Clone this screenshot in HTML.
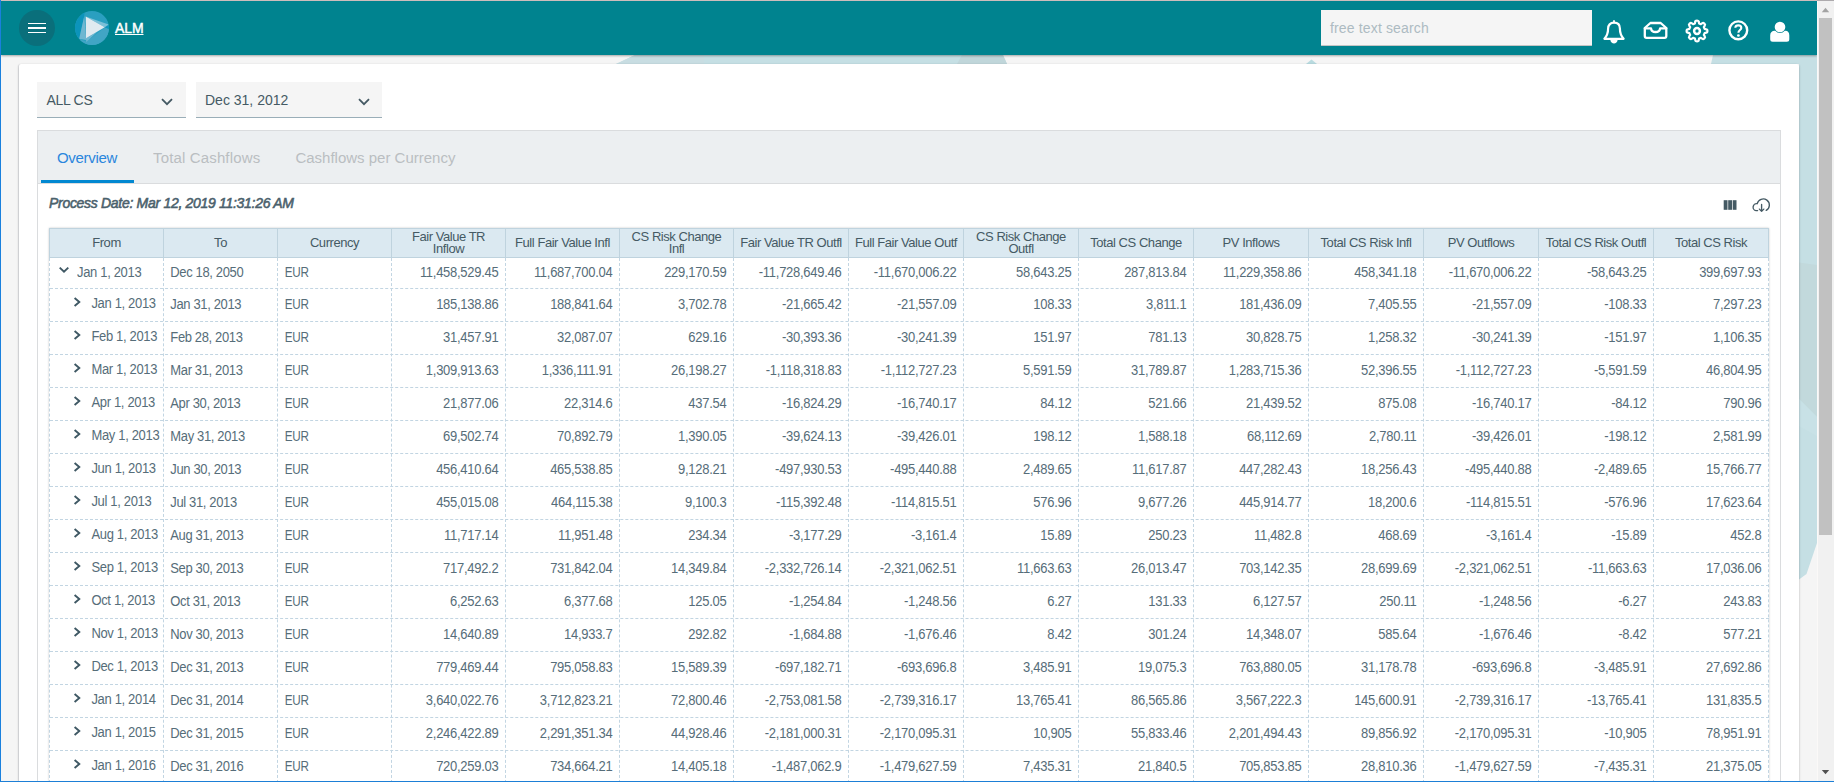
<!DOCTYPE html>
<html lang="en">
<head>
<meta charset="utf-8">
<title>ALM</title>
<style>
*{box-sizing:border-box;margin:0;padding:0}
html,body{width:1834px;height:782px;overflow:hidden;background:#f5f5f5;font-family:"Liberation Sans",sans-serif;color:#455a64}
#root{position:absolute;left:0;top:0;width:1834px;height:782px;overflow:hidden;background:#f5f5f5}
.abs{position:absolute}
#bgsvg{position:absolute;left:0;top:0;width:1817px;height:782px}
#header{position:absolute;left:1px;top:1px;width:1816px;height:54px;background:#00838f;box-shadow:0 1px 2px rgba(0,0,0,.32)}
#topline{position:absolute;left:1px;top:0;width:1833px;height:1px;background:linear-gradient(to right,#cdbdbc 0,#cdbdbc 1816px,#adaaad 1816px,#adaaad 1833px)}
#leftline{position:absolute;left:0;top:0;width:1px;height:782px;background:#1a80dd}
#botline{position:absolute;left:0;top:781px;width:1834px;height:1px;background:#1d7fd6}
#sb{position:absolute;left:1817px;top:1px;width:17px;height:780px;background:#f1f1f1;border-left:1px solid #fbf9f8}
#sb .thumb{position:absolute;left:1px;top:17px;width:13px;height:517px;background:#c1c1c1}
#menu{position:absolute;left:18px;top:9px;width:36px;height:36px;border-radius:50%;background:#0a6f7b}
#menu i{position:absolute;left:9px;width:18px;height:2px;background:#fff}
#alm{position:absolute;left:114px;top:19px;font-size:14px;font-weight:normal;-webkit-text-stroke:0.45px #fff;color:#fff;text-decoration:underline;line-height:16px;letter-spacing:-0.1px}
#search{position:absolute;left:1320px;top:9px;width:271px;height:36px;background:#f5f5f5;color:#adbbc2;font-size:14px;line-height:36px;padding-left:9px;letter-spacing:0.15px;border-bottom:1px solid #c4c4c4}
.hic{position:absolute;overflow:visible}
#card{position:absolute;left:19px;top:64px;width:1780px;height:740px;background:#fff;border-radius:2px;box-shadow:0 1px 3px rgba(0,0,0,.12),0 1px 2px rgba(0,0,0,.2),-1px 0 1px rgba(40,50,90,.08)}
.dd{position:absolute;top:82px;height:36px;background:#f5f5f5;border-bottom:1px solid #9aaeb8;font-size:14px;line-height:37px;padding-left:9px;color:#455a64}
.dd svg{position:absolute;right:13px;top:16px;width:12px;height:8px}
#panel{position:absolute;left:37px;top:130px;width:1744px;height:700px;border:1px solid #dadcde;background:#fff}
#tabs{position:absolute;left:0;top:0;width:1742px;height:53px;background:#eceff1;border-bottom:1px solid #dadcde}
.tab{position:absolute;top:0;height:52px;line-height:54px;font-size:15px;color:#babec1;white-space:nowrap;transform:scaleY(1.03)}
.tab.on{color:#2a86dd}
#ink{position:absolute;left:41px;top:180px;width:93px;height:3px;background:#0288d1}
#pd{position:absolute;left:49px;top:194px;font-size:14px;font-weight:normal;font-style:italic;line-height:18px;color:#4b616c;-webkit-text-stroke:0.55px #4b616c;white-space:nowrap;letter-spacing:-0.3px;transform:scaleY(1.03);transform-origin:0 50%}
/* table */
.tshadow{position:absolute;left:49px;top:228px;width:1720px;height:600px;box-shadow:0 0 2px rgba(0,0,0,.22)}
.th-bg{position:absolute;left:49px;top:228px;width:1720px;height:30px;background:#dbe9f1;border-top:1px solid #bfd3de;border-bottom:1px solid #bfd3de}
.th{position:absolute;top:229px;height:28px;line-height:28px;text-align:center;font-size:13px;color:#455a64;white-space:nowrap;letter-spacing:-0.45px}
.th.two{line-height:12px;padding-top:2px}
.hv{position:absolute;top:228px;width:1px;height:30px;background:#bfd3de}
.vd{position:absolute;top:258px;width:0;height:530px;border-left:1px dashed #c2d5e2}
.hd{position:absolute;left:50px;width:1719px;height:0;border-top:1px dashed #c2d5e2}
.td{position:absolute;font-size:13px;color:#566d79;white-space:nowrap;letter-spacing:-0.28px;transform:scaleY(1.07)}
.td.l{letter-spacing:-0.36px}
.td.first{letter-spacing:-0.33px}
.td.cur{transform:scale(0.9,1.07);transform-origin:0 50%;padding-left:7.6px !important}
.td.l{padding-left:6.3px}
.td.r{text-align:right;padding-right:6.6px}
.td.first{transform:none}
.td.first span{position:absolute;top:-1px;transform:scaleY(1.07)}
.td.first.r0 span{top:0}
.chev{position:absolute;top:6.6px;width:12px;height:12px;fill:none;stroke:#3f5864;stroke-width:1.9}
</style>
</head>
<body>
<div id="root">
<svg id="bgsvg" viewBox="0 0 1817 782">
  <polygon points="635,55 1003,55 1007,64 616,64" fill="#c5dfe4"/>
  <polygon points="635,55 704,55 704,64 616,64" fill="#c8dde2"/>
  <polygon points="962,55 1003,55 1007,64 957,64" fill="#c0d6da"/>
  <polygon points="1311.5,59.5 1317,64 1306,64" fill="#b9dbe0"/>
  <polygon points="1713,55 1817,55 1817,543 1806.5,574 1799,579.5 1799,64 1711,64" fill="#c5dfe4"/>
  <polygon points="1799,262.5 1817,265 1817,417 1799,399" fill="#c2d9dc"/>
  <polygon points="1799,399 1817,417 1817,436 1799,426" fill="#c8e1e6"/>
</svg>
<div id="card"></div>
<div id="header">
  <div id="menu"><i style="top:12.7px;height:1.4px"></i><i style="top:17px"></i><i style="top:21.7px;height:1.4px"></i></div>
  <svg class="hic" style="left:73.7px;top:9.8px;width:34px;height:34px" viewBox="0 0 34 34">
    <defs><clipPath id="lc"><circle cx="17" cy="17" r="17"/></clipPath></defs>
    <g clip-path="url(#lc)">
      <rect x="0" y="0" width="34" height="34" fill="#2a9fc0"/>
      <polygon points="-2,-2 10,-2 9.1,5.2 4.2,27.8 6,36 -2,36" fill="#0c94bb"/>
      <polygon points="36,16 30,16.4 11.2,30.6 5,28.2 4,36 36,36" fill="#41a5c5"/>
      <polygon points="29.7,16.2 35,13.4 35,18.6" fill="#0c94bb"/>
      <polygon points="9.3,5 4.2,27.8 11.2,29" fill="#6fb7d1"/>
      <polygon points="10.7,5.5 33.6,13.4 29.7,16.2" fill="#7cc0d8"/>
      <polygon points="11,27.3 11.3,31 22,21" fill="#6fb7d1"/>
      <polygon points="10.7,5.5 29.7,16.2 11,27.3" fill="#e0eaf0"/>
    </g>
  </svg>
  <div id="alm">ALM</div>
  <div id="search">free text search</div>
  <!-- bell -->
  <svg class="hic" style="left:1601px;top:18px;width:24px;height:26px" viewBox="0 0 24 26" fill="none" stroke="#fff" stroke-width="2.2" stroke-linejoin="round" stroke-linecap="round">
    <path d="M12 3.7 C8.2 3.7 6.1 6.2 6.1 9.6 C6.1 14 5 17 2.4 19.8 L21.6 19.8 C19 17 17.9 14 17.9 9.6 C17.9 6.2 15.8 3.7 12 3.7 Z"/>
    <path d="M12 2 L12 3.4" stroke-width="1.8"/>
    <path d="M8.4 21 C8.7 25.6 15.3 25.6 15.6 21 Z" fill="#fff" stroke="none"/>
  </svg>
  <!-- inbox -->
  <svg class="hic" style="left:1642px;top:19px;width:26px;height:20px" viewBox="0 0 26 20" fill="none" stroke="#fff" stroke-width="2.3" stroke-linejoin="round" stroke-linecap="round">
    <path d="M1.8 8 L7.4 3 L17.7 3 L23.3 8 L23.3 16 Q23.3 17.8 21.5 17.8 L3.6 17.8 Q1.8 17.8 1.8 16 Z"/>
    <path d="M1.8 8.3 L8 8.3 C8.6 13.2 16.5 13.2 17.1 8.3 L23.3 8.3"/>
  </svg>
  <!-- gear -->
  <svg class="hic" style="left:1683.9px;top:17.5px;width:24px;height:24px" viewBox="-12 -12 24 24" fill="none" stroke="#fff" stroke-width="2.2" stroke-linejoin="round">
    <path d="M-2.05 -7.60L-1.70 -9.35C-1.70 -10.75 1.70 -10.75 1.70 -9.35L2.05 -7.60L3.92 -6.82L5.41 -7.81C6.40 -8.80 8.80 -6.40 7.81 -5.41L6.82 -3.92L7.60 -2.05L9.35 -1.70C10.75 -1.70 10.75 1.70 9.35 1.70L7.60 2.05L6.82 3.92L7.81 5.41C8.80 6.40 6.40 8.80 5.41 7.81L3.92 6.82L2.05 7.60L1.70 9.35C1.70 10.75 -1.70 10.75 -1.70 9.35L-2.05 7.60L-3.92 6.82L-5.41 7.81C-6.40 8.80 -8.80 6.40 -7.81 5.41L-6.82 3.92L-7.60 2.05L-9.35 1.70C-10.75 1.70 -10.75 -1.70 -9.35 -1.70L-7.60 -2.05L-6.82 -3.92L-7.81 -5.41C-8.80 -6.40 -6.40 -8.80 -5.41 -7.81L-3.92 -6.82Z"/>
    <circle cx="0" cy="0" r="2.9" stroke-width="2.5"/>
  </svg>
  <!-- help -->
  <svg class="hic" style="left:1726px;top:18px;width:24px;height:24px" viewBox="0 0 24 24" fill="none" stroke="#fff" stroke-width="2.4">
    <circle cx="11.3" cy="11.3" r="8.9"/>
    <path d="M8.3 8.8 C8.5 5.6 14.3 5.6 14.3 8.9 C14.3 11 11.4 11.2 11.4 13.7" stroke-width="2.1"/>
    <circle cx="11.4" cy="16.5" r="1.35" fill="#fff" stroke="none"/>
  </svg>
  <!-- user -->
  <svg class="hic" style="left:1768px;top:18px;width:22px;height:24px" viewBox="0 0 22 24" fill="#fff" stroke="none">
    <circle cx="11" cy="8" r="5.3"/>
    <path d="M1.2 20.3 L1.2 16.2 C1.2 13.4 3.2 11.7 5.6 11.7 L6.28 11.7 A6 6 0 0 0 15.72 11.7 L16.4 11.7 C18.8 11.7 20.3 13.4 20.3 16.2 L20.3 20.3 Q20.3 22.8 17.8 22.8 L3.7 22.8 Q1.2 22.8 1.2 20.3 Z"/>
  </svg>
</div>
<div class="dd" style="left:37px;width:149px;letter-spacing:-0.3px;padding-left:9.5px">ALL CS<svg viewBox="0 0 12 8" fill="none" stroke="#455a64" stroke-width="1.8"><path d="M1 1.2 L6 6.2 L11 1.2"/></svg></div>
<div class="dd" style="left:196px;width:186px">Dec 31, 2012<svg style="right:12px" viewBox="0 0 12 8" fill="none" stroke="#455a64" stroke-width="1.8"><path d="M1 1.2 L6 6.2 L11 1.2"/></svg></div>
<div id="panel"><div id="tabs">
  <div class="tab on" style="left:19px;letter-spacing:-0.3px">Overview</div>
  <div class="tab" style="left:115px;letter-spacing:0.15px">Total Cashflows</div>
  <div class="tab" style="left:257.4px">Cashflows per Currency</div>
</div></div>
<div id="ink"></div>
<div id="pd">Process Date: Mar 12, 2019 11:31:26 AM</div>
<!-- toolbar icons -->
<svg class="abs" style="left:1723px;top:199px;width:15px;height:12px" viewBox="1723 199 15 12"><rect x="1723.7" y="200.2" width="3.8" height="9.6" fill="#455a64"/><rect x="1728.2" y="200.2" width="3.8" height="9.6" fill="#455a64"/><rect x="1732.7" y="200.2" width="3.8" height="9.6" fill="#455a64"/></svg>
<svg class="abs" style="left:1750px;top:196px;width:22px;height:18px" viewBox="1750 196 22 18" fill="none" stroke="#455a64" stroke-width="1.35" stroke-linecap="round" stroke-linejoin="round">
  <path d="M1757.6 210.6 L1756 210.6 A3.4 3.4 0 0 1 1757.2 203.7 A6.15 6.15 0 1 1 1766.2 210.4"/>
  <path d="M1761.6 204.4 L1761.6 211.2 M1759.4 209.1 L1761.6 211.4 L1763.8 209.1"/>
</svg>
<div class="tshadow"></div>
<div class="th-bg"></div>
<div class="th" style="left:50px;width:113px">From</div>
<div class="th" style="left:164px;width:113px">To</div>
<div class="th" style="left:278px;width:113px">Currency</div>
<div class="th two" style="left:392px;width:113px">Fair Value TR<br>Inflow</div>
<div class="th" style="left:506px;width:113px">Full Fair Value Infl</div>
<div class="th two" style="left:620px;width:113px">CS Risk Change<br>Infl</div>
<div class="th" style="left:734px;width:114px">Fair Value TR Outfl</div>
<div class="th" style="left:849px;width:114px">Full Fair Value Outf</div>
<div class="th two" style="left:964px;width:114px">CS Risk Change<br>Outfl</div>
<div class="th" style="left:1079px;width:114px">Total CS Change</div>
<div class="th" style="left:1194px;width:114px">PV Inflows</div>
<div class="th" style="left:1309px;width:114px">Total CS Risk Infl</div>
<div class="th" style="left:1424px;width:114px">PV Outflows</div>
<div class="th" style="left:1539px;width:114px">Total CS Risk Outfl</div>
<div class="th" style="left:1654px;width:114px">Total CS Risk</div>
<div class="hv" style="left:49px"></div>
<div class="hv" style="left:163px"></div>
<div class="hv" style="left:277px"></div>
<div class="hv" style="left:391px"></div>
<div class="hv" style="left:505px"></div>
<div class="hv" style="left:619px"></div>
<div class="hv" style="left:733px"></div>
<div class="hv" style="left:848px"></div>
<div class="hv" style="left:963px"></div>
<div class="hv" style="left:1078px"></div>
<div class="hv" style="left:1193px"></div>
<div class="hv" style="left:1308px"></div>
<div class="hv" style="left:1423px"></div>
<div class="hv" style="left:1538px"></div>
<div class="hv" style="left:1653px"></div>
<div class="hv" style="left:1768px"></div>
<div class="vd" style="left:49px"></div>
<div class="vd" style="left:163px"></div>
<div class="vd" style="left:277px"></div>
<div class="vd" style="left:391px"></div>
<div class="vd" style="left:505px"></div>
<div class="vd" style="left:619px"></div>
<div class="vd" style="left:733px"></div>
<div class="vd" style="left:848px"></div>
<div class="vd" style="left:963px"></div>
<div class="vd" style="left:1078px"></div>
<div class="vd" style="left:1193px"></div>
<div class="vd" style="left:1308px"></div>
<div class="vd" style="left:1423px"></div>
<div class="vd" style="left:1538px"></div>
<div class="vd" style="left:1653px"></div>
<div class="vd" style="left:1768px"></div>
<div class="hd" style="top:288px"></div>
<div class="td first r0" style="left:50px;top:258px;width:113px;height:30px;line-height:30px"><svg class="chev" style="left:8px;top:6px" viewBox="0 0 12 12"><path d="M1.7 3.6 L6 7.7 L10.3 3.6" /></svg><span style="left:27px">Jan 1, 2013</span></div>
<div class="td l" style="left:164px;top:258px;width:113px;height:30px;line-height:30px">Dec 18, 2050</div>
<div class="td l cur" style="left:278px;top:258px;width:113px;height:30px;line-height:30px">EUR</div>
<div class="td r" style="left:392px;top:258px;width:113px;height:30px;line-height:30px">11,458,529.45</div>
<div class="td r" style="left:506px;top:258px;width:113px;height:30px;line-height:30px">11,687,700.04</div>
<div class="td r" style="left:620px;top:258px;width:113px;height:30px;line-height:30px">229,170.59</div>
<div class="td r" style="left:734px;top:258px;width:114px;height:30px;line-height:30px">-11,728,649.46</div>
<div class="td r" style="left:849px;top:258px;width:114px;height:30px;line-height:30px">-11,670,006.22</div>
<div class="td r" style="left:964px;top:258px;width:114px;height:30px;line-height:30px">58,643.25</div>
<div class="td r" style="left:1079px;top:258px;width:114px;height:30px;line-height:30px">287,813.84</div>
<div class="td r" style="left:1194px;top:258px;width:114px;height:30px;line-height:30px">11,229,358.86</div>
<div class="td r" style="left:1309px;top:258px;width:114px;height:30px;line-height:30px">458,341.18</div>
<div class="td r" style="left:1424px;top:258px;width:114px;height:30px;line-height:30px">-11,670,006.22</div>
<div class="td r" style="left:1539px;top:258px;width:114px;height:30px;line-height:30px">-58,643.25</div>
<div class="td r" style="left:1654px;top:258px;width:114px;height:30px;line-height:30px">399,697.93</div>
<div class="hd" style="top:321px"></div>
<div class="td first" style="left:50px;top:289px;width:113px;height:32px;line-height:32px"><svg class="chev" style="left:21.3px" viewBox="0 0 12 12"><path d="M3.6 2 L8.3 6 L3.6 10" /></svg><span style="left:41.4px">Jan 1, 2013</span></div>
<div class="td l" style="left:164px;top:289px;width:113px;height:32px;line-height:32px">Jan 31, 2013</div>
<div class="td l cur" style="left:278px;top:289px;width:113px;height:32px;line-height:32px">EUR</div>
<div class="td r" style="left:392px;top:289px;width:113px;height:32px;line-height:32px">185,138.86</div>
<div class="td r" style="left:506px;top:289px;width:113px;height:32px;line-height:32px">188,841.64</div>
<div class="td r" style="left:620px;top:289px;width:113px;height:32px;line-height:32px">3,702.78</div>
<div class="td r" style="left:734px;top:289px;width:114px;height:32px;line-height:32px">-21,665.42</div>
<div class="td r" style="left:849px;top:289px;width:114px;height:32px;line-height:32px">-21,557.09</div>
<div class="td r" style="left:964px;top:289px;width:114px;height:32px;line-height:32px">108.33</div>
<div class="td r" style="left:1079px;top:289px;width:114px;height:32px;line-height:32px">3,811.1</div>
<div class="td r" style="left:1194px;top:289px;width:114px;height:32px;line-height:32px">181,436.09</div>
<div class="td r" style="left:1309px;top:289px;width:114px;height:32px;line-height:32px">7,405.55</div>
<div class="td r" style="left:1424px;top:289px;width:114px;height:32px;line-height:32px">-21,557.09</div>
<div class="td r" style="left:1539px;top:289px;width:114px;height:32px;line-height:32px">-108.33</div>
<div class="td r" style="left:1654px;top:289px;width:114px;height:32px;line-height:32px">7,297.23</div>
<div class="hd" style="top:354px"></div>
<div class="td first" style="left:50px;top:322px;width:113px;height:32px;line-height:32px"><svg class="chev" style="left:21.3px" viewBox="0 0 12 12"><path d="M3.6 2 L8.3 6 L3.6 10" /></svg><span style="left:41.4px">Feb 1, 2013</span></div>
<div class="td l" style="left:164px;top:322px;width:113px;height:32px;line-height:32px">Feb 28, 2013</div>
<div class="td l cur" style="left:278px;top:322px;width:113px;height:32px;line-height:32px">EUR</div>
<div class="td r" style="left:392px;top:322px;width:113px;height:32px;line-height:32px">31,457.91</div>
<div class="td r" style="left:506px;top:322px;width:113px;height:32px;line-height:32px">32,087.07</div>
<div class="td r" style="left:620px;top:322px;width:113px;height:32px;line-height:32px">629.16</div>
<div class="td r" style="left:734px;top:322px;width:114px;height:32px;line-height:32px">-30,393.36</div>
<div class="td r" style="left:849px;top:322px;width:114px;height:32px;line-height:32px">-30,241.39</div>
<div class="td r" style="left:964px;top:322px;width:114px;height:32px;line-height:32px">151.97</div>
<div class="td r" style="left:1079px;top:322px;width:114px;height:32px;line-height:32px">781.13</div>
<div class="td r" style="left:1194px;top:322px;width:114px;height:32px;line-height:32px">30,828.75</div>
<div class="td r" style="left:1309px;top:322px;width:114px;height:32px;line-height:32px">1,258.32</div>
<div class="td r" style="left:1424px;top:322px;width:114px;height:32px;line-height:32px">-30,241.39</div>
<div class="td r" style="left:1539px;top:322px;width:114px;height:32px;line-height:32px">-151.97</div>
<div class="td r" style="left:1654px;top:322px;width:114px;height:32px;line-height:32px">1,106.35</div>
<div class="hd" style="top:387px"></div>
<div class="td first" style="left:50px;top:355px;width:113px;height:32px;line-height:32px"><svg class="chev" style="left:21.3px" viewBox="0 0 12 12"><path d="M3.6 2 L8.3 6 L3.6 10" /></svg><span style="left:41.4px">Mar 1, 2013</span></div>
<div class="td l" style="left:164px;top:355px;width:113px;height:32px;line-height:32px">Mar 31, 2013</div>
<div class="td l cur" style="left:278px;top:355px;width:113px;height:32px;line-height:32px">EUR</div>
<div class="td r" style="left:392px;top:355px;width:113px;height:32px;line-height:32px">1,309,913.63</div>
<div class="td r" style="left:506px;top:355px;width:113px;height:32px;line-height:32px">1,336,111.91</div>
<div class="td r" style="left:620px;top:355px;width:113px;height:32px;line-height:32px">26,198.27</div>
<div class="td r" style="left:734px;top:355px;width:114px;height:32px;line-height:32px">-1,118,318.83</div>
<div class="td r" style="left:849px;top:355px;width:114px;height:32px;line-height:32px">-1,112,727.23</div>
<div class="td r" style="left:964px;top:355px;width:114px;height:32px;line-height:32px">5,591.59</div>
<div class="td r" style="left:1079px;top:355px;width:114px;height:32px;line-height:32px">31,789.87</div>
<div class="td r" style="left:1194px;top:355px;width:114px;height:32px;line-height:32px">1,283,715.36</div>
<div class="td r" style="left:1309px;top:355px;width:114px;height:32px;line-height:32px">52,396.55</div>
<div class="td r" style="left:1424px;top:355px;width:114px;height:32px;line-height:32px">-1,112,727.23</div>
<div class="td r" style="left:1539px;top:355px;width:114px;height:32px;line-height:32px">-5,591.59</div>
<div class="td r" style="left:1654px;top:355px;width:114px;height:32px;line-height:32px">46,804.95</div>
<div class="hd" style="top:420px"></div>
<div class="td first" style="left:50px;top:388px;width:113px;height:32px;line-height:32px"><svg class="chev" style="left:21.3px" viewBox="0 0 12 12"><path d="M3.6 2 L8.3 6 L3.6 10" /></svg><span style="left:41.4px">Apr 1, 2013</span></div>
<div class="td l" style="left:164px;top:388px;width:113px;height:32px;line-height:32px">Apr 30, 2013</div>
<div class="td l cur" style="left:278px;top:388px;width:113px;height:32px;line-height:32px">EUR</div>
<div class="td r" style="left:392px;top:388px;width:113px;height:32px;line-height:32px">21,877.06</div>
<div class="td r" style="left:506px;top:388px;width:113px;height:32px;line-height:32px">22,314.6</div>
<div class="td r" style="left:620px;top:388px;width:113px;height:32px;line-height:32px">437.54</div>
<div class="td r" style="left:734px;top:388px;width:114px;height:32px;line-height:32px">-16,824.29</div>
<div class="td r" style="left:849px;top:388px;width:114px;height:32px;line-height:32px">-16,740.17</div>
<div class="td r" style="left:964px;top:388px;width:114px;height:32px;line-height:32px">84.12</div>
<div class="td r" style="left:1079px;top:388px;width:114px;height:32px;line-height:32px">521.66</div>
<div class="td r" style="left:1194px;top:388px;width:114px;height:32px;line-height:32px">21,439.52</div>
<div class="td r" style="left:1309px;top:388px;width:114px;height:32px;line-height:32px">875.08</div>
<div class="td r" style="left:1424px;top:388px;width:114px;height:32px;line-height:32px">-16,740.17</div>
<div class="td r" style="left:1539px;top:388px;width:114px;height:32px;line-height:32px">-84.12</div>
<div class="td r" style="left:1654px;top:388px;width:114px;height:32px;line-height:32px">790.96</div>
<div class="hd" style="top:453px"></div>
<div class="td first" style="left:50px;top:421px;width:113px;height:32px;line-height:32px"><svg class="chev" style="left:21.3px" viewBox="0 0 12 12"><path d="M3.6 2 L8.3 6 L3.6 10" /></svg><span style="left:41.4px">May 1, 2013</span></div>
<div class="td l" style="left:164px;top:421px;width:113px;height:32px;line-height:32px">May 31, 2013</div>
<div class="td l cur" style="left:278px;top:421px;width:113px;height:32px;line-height:32px">EUR</div>
<div class="td r" style="left:392px;top:421px;width:113px;height:32px;line-height:32px">69,502.74</div>
<div class="td r" style="left:506px;top:421px;width:113px;height:32px;line-height:32px">70,892.79</div>
<div class="td r" style="left:620px;top:421px;width:113px;height:32px;line-height:32px">1,390.05</div>
<div class="td r" style="left:734px;top:421px;width:114px;height:32px;line-height:32px">-39,624.13</div>
<div class="td r" style="left:849px;top:421px;width:114px;height:32px;line-height:32px">-39,426.01</div>
<div class="td r" style="left:964px;top:421px;width:114px;height:32px;line-height:32px">198.12</div>
<div class="td r" style="left:1079px;top:421px;width:114px;height:32px;line-height:32px">1,588.18</div>
<div class="td r" style="left:1194px;top:421px;width:114px;height:32px;line-height:32px">68,112.69</div>
<div class="td r" style="left:1309px;top:421px;width:114px;height:32px;line-height:32px">2,780.11</div>
<div class="td r" style="left:1424px;top:421px;width:114px;height:32px;line-height:32px">-39,426.01</div>
<div class="td r" style="left:1539px;top:421px;width:114px;height:32px;line-height:32px">-198.12</div>
<div class="td r" style="left:1654px;top:421px;width:114px;height:32px;line-height:32px">2,581.99</div>
<div class="hd" style="top:486px"></div>
<div class="td first" style="left:50px;top:454px;width:113px;height:32px;line-height:32px"><svg class="chev" style="left:21.3px" viewBox="0 0 12 12"><path d="M3.6 2 L8.3 6 L3.6 10" /></svg><span style="left:41.4px">Jun 1, 2013</span></div>
<div class="td l" style="left:164px;top:454px;width:113px;height:32px;line-height:32px">Jun 30, 2013</div>
<div class="td l cur" style="left:278px;top:454px;width:113px;height:32px;line-height:32px">EUR</div>
<div class="td r" style="left:392px;top:454px;width:113px;height:32px;line-height:32px">456,410.64</div>
<div class="td r" style="left:506px;top:454px;width:113px;height:32px;line-height:32px">465,538.85</div>
<div class="td r" style="left:620px;top:454px;width:113px;height:32px;line-height:32px">9,128.21</div>
<div class="td r" style="left:734px;top:454px;width:114px;height:32px;line-height:32px">-497,930.53</div>
<div class="td r" style="left:849px;top:454px;width:114px;height:32px;line-height:32px">-495,440.88</div>
<div class="td r" style="left:964px;top:454px;width:114px;height:32px;line-height:32px">2,489.65</div>
<div class="td r" style="left:1079px;top:454px;width:114px;height:32px;line-height:32px">11,617.87</div>
<div class="td r" style="left:1194px;top:454px;width:114px;height:32px;line-height:32px">447,282.43</div>
<div class="td r" style="left:1309px;top:454px;width:114px;height:32px;line-height:32px">18,256.43</div>
<div class="td r" style="left:1424px;top:454px;width:114px;height:32px;line-height:32px">-495,440.88</div>
<div class="td r" style="left:1539px;top:454px;width:114px;height:32px;line-height:32px">-2,489.65</div>
<div class="td r" style="left:1654px;top:454px;width:114px;height:32px;line-height:32px">15,766.77</div>
<div class="hd" style="top:519px"></div>
<div class="td first" style="left:50px;top:487px;width:113px;height:32px;line-height:32px"><svg class="chev" style="left:21.3px" viewBox="0 0 12 12"><path d="M3.6 2 L8.3 6 L3.6 10" /></svg><span style="left:41.4px">Jul 1, 2013</span></div>
<div class="td l" style="left:164px;top:487px;width:113px;height:32px;line-height:32px">Jul 31, 2013</div>
<div class="td l cur" style="left:278px;top:487px;width:113px;height:32px;line-height:32px">EUR</div>
<div class="td r" style="left:392px;top:487px;width:113px;height:32px;line-height:32px">455,015.08</div>
<div class="td r" style="left:506px;top:487px;width:113px;height:32px;line-height:32px">464,115.38</div>
<div class="td r" style="left:620px;top:487px;width:113px;height:32px;line-height:32px">9,100.3</div>
<div class="td r" style="left:734px;top:487px;width:114px;height:32px;line-height:32px">-115,392.48</div>
<div class="td r" style="left:849px;top:487px;width:114px;height:32px;line-height:32px">-114,815.51</div>
<div class="td r" style="left:964px;top:487px;width:114px;height:32px;line-height:32px">576.96</div>
<div class="td r" style="left:1079px;top:487px;width:114px;height:32px;line-height:32px">9,677.26</div>
<div class="td r" style="left:1194px;top:487px;width:114px;height:32px;line-height:32px">445,914.77</div>
<div class="td r" style="left:1309px;top:487px;width:114px;height:32px;line-height:32px">18,200.6</div>
<div class="td r" style="left:1424px;top:487px;width:114px;height:32px;line-height:32px">-114,815.51</div>
<div class="td r" style="left:1539px;top:487px;width:114px;height:32px;line-height:32px">-576.96</div>
<div class="td r" style="left:1654px;top:487px;width:114px;height:32px;line-height:32px">17,623.64</div>
<div class="hd" style="top:552px"></div>
<div class="td first" style="left:50px;top:520px;width:113px;height:32px;line-height:32px"><svg class="chev" style="left:21.3px" viewBox="0 0 12 12"><path d="M3.6 2 L8.3 6 L3.6 10" /></svg><span style="left:41.4px">Aug 1, 2013</span></div>
<div class="td l" style="left:164px;top:520px;width:113px;height:32px;line-height:32px">Aug 31, 2013</div>
<div class="td l cur" style="left:278px;top:520px;width:113px;height:32px;line-height:32px">EUR</div>
<div class="td r" style="left:392px;top:520px;width:113px;height:32px;line-height:32px">11,717.14</div>
<div class="td r" style="left:506px;top:520px;width:113px;height:32px;line-height:32px">11,951.48</div>
<div class="td r" style="left:620px;top:520px;width:113px;height:32px;line-height:32px">234.34</div>
<div class="td r" style="left:734px;top:520px;width:114px;height:32px;line-height:32px">-3,177.29</div>
<div class="td r" style="left:849px;top:520px;width:114px;height:32px;line-height:32px">-3,161.4</div>
<div class="td r" style="left:964px;top:520px;width:114px;height:32px;line-height:32px">15.89</div>
<div class="td r" style="left:1079px;top:520px;width:114px;height:32px;line-height:32px">250.23</div>
<div class="td r" style="left:1194px;top:520px;width:114px;height:32px;line-height:32px">11,482.8</div>
<div class="td r" style="left:1309px;top:520px;width:114px;height:32px;line-height:32px">468.69</div>
<div class="td r" style="left:1424px;top:520px;width:114px;height:32px;line-height:32px">-3,161.4</div>
<div class="td r" style="left:1539px;top:520px;width:114px;height:32px;line-height:32px">-15.89</div>
<div class="td r" style="left:1654px;top:520px;width:114px;height:32px;line-height:32px">452.8</div>
<div class="hd" style="top:585px"></div>
<div class="td first" style="left:50px;top:553px;width:113px;height:32px;line-height:32px"><svg class="chev" style="left:21.3px" viewBox="0 0 12 12"><path d="M3.6 2 L8.3 6 L3.6 10" /></svg><span style="left:41.4px">Sep 1, 2013</span></div>
<div class="td l" style="left:164px;top:553px;width:113px;height:32px;line-height:32px">Sep 30, 2013</div>
<div class="td l cur" style="left:278px;top:553px;width:113px;height:32px;line-height:32px">EUR</div>
<div class="td r" style="left:392px;top:553px;width:113px;height:32px;line-height:32px">717,492.2</div>
<div class="td r" style="left:506px;top:553px;width:113px;height:32px;line-height:32px">731,842.04</div>
<div class="td r" style="left:620px;top:553px;width:113px;height:32px;line-height:32px">14,349.84</div>
<div class="td r" style="left:734px;top:553px;width:114px;height:32px;line-height:32px">-2,332,726.14</div>
<div class="td r" style="left:849px;top:553px;width:114px;height:32px;line-height:32px">-2,321,062.51</div>
<div class="td r" style="left:964px;top:553px;width:114px;height:32px;line-height:32px">11,663.63</div>
<div class="td r" style="left:1079px;top:553px;width:114px;height:32px;line-height:32px">26,013.47</div>
<div class="td r" style="left:1194px;top:553px;width:114px;height:32px;line-height:32px">703,142.35</div>
<div class="td r" style="left:1309px;top:553px;width:114px;height:32px;line-height:32px">28,699.69</div>
<div class="td r" style="left:1424px;top:553px;width:114px;height:32px;line-height:32px">-2,321,062.51</div>
<div class="td r" style="left:1539px;top:553px;width:114px;height:32px;line-height:32px">-11,663.63</div>
<div class="td r" style="left:1654px;top:553px;width:114px;height:32px;line-height:32px">17,036.06</div>
<div class="hd" style="top:618px"></div>
<div class="td first" style="left:50px;top:586px;width:113px;height:32px;line-height:32px"><svg class="chev" style="left:21.3px" viewBox="0 0 12 12"><path d="M3.6 2 L8.3 6 L3.6 10" /></svg><span style="left:41.4px">Oct 1, 2013</span></div>
<div class="td l" style="left:164px;top:586px;width:113px;height:32px;line-height:32px">Oct 31, 2013</div>
<div class="td l cur" style="left:278px;top:586px;width:113px;height:32px;line-height:32px">EUR</div>
<div class="td r" style="left:392px;top:586px;width:113px;height:32px;line-height:32px">6,252.63</div>
<div class="td r" style="left:506px;top:586px;width:113px;height:32px;line-height:32px">6,377.68</div>
<div class="td r" style="left:620px;top:586px;width:113px;height:32px;line-height:32px">125.05</div>
<div class="td r" style="left:734px;top:586px;width:114px;height:32px;line-height:32px">-1,254.84</div>
<div class="td r" style="left:849px;top:586px;width:114px;height:32px;line-height:32px">-1,248.56</div>
<div class="td r" style="left:964px;top:586px;width:114px;height:32px;line-height:32px">6.27</div>
<div class="td r" style="left:1079px;top:586px;width:114px;height:32px;line-height:32px">131.33</div>
<div class="td r" style="left:1194px;top:586px;width:114px;height:32px;line-height:32px">6,127.57</div>
<div class="td r" style="left:1309px;top:586px;width:114px;height:32px;line-height:32px">250.11</div>
<div class="td r" style="left:1424px;top:586px;width:114px;height:32px;line-height:32px">-1,248.56</div>
<div class="td r" style="left:1539px;top:586px;width:114px;height:32px;line-height:32px">-6.27</div>
<div class="td r" style="left:1654px;top:586px;width:114px;height:32px;line-height:32px">243.83</div>
<div class="hd" style="top:651px"></div>
<div class="td first" style="left:50px;top:619px;width:113px;height:32px;line-height:32px"><svg class="chev" style="left:21.3px" viewBox="0 0 12 12"><path d="M3.6 2 L8.3 6 L3.6 10" /></svg><span style="left:41.4px">Nov 1, 2013</span></div>
<div class="td l" style="left:164px;top:619px;width:113px;height:32px;line-height:32px">Nov 30, 2013</div>
<div class="td l cur" style="left:278px;top:619px;width:113px;height:32px;line-height:32px">EUR</div>
<div class="td r" style="left:392px;top:619px;width:113px;height:32px;line-height:32px">14,640.89</div>
<div class="td r" style="left:506px;top:619px;width:113px;height:32px;line-height:32px">14,933.7</div>
<div class="td r" style="left:620px;top:619px;width:113px;height:32px;line-height:32px">292.82</div>
<div class="td r" style="left:734px;top:619px;width:114px;height:32px;line-height:32px">-1,684.88</div>
<div class="td r" style="left:849px;top:619px;width:114px;height:32px;line-height:32px">-1,676.46</div>
<div class="td r" style="left:964px;top:619px;width:114px;height:32px;line-height:32px">8.42</div>
<div class="td r" style="left:1079px;top:619px;width:114px;height:32px;line-height:32px">301.24</div>
<div class="td r" style="left:1194px;top:619px;width:114px;height:32px;line-height:32px">14,348.07</div>
<div class="td r" style="left:1309px;top:619px;width:114px;height:32px;line-height:32px">585.64</div>
<div class="td r" style="left:1424px;top:619px;width:114px;height:32px;line-height:32px">-1,676.46</div>
<div class="td r" style="left:1539px;top:619px;width:114px;height:32px;line-height:32px">-8.42</div>
<div class="td r" style="left:1654px;top:619px;width:114px;height:32px;line-height:32px">577.21</div>
<div class="hd" style="top:684px"></div>
<div class="td first" style="left:50px;top:652px;width:113px;height:32px;line-height:32px"><svg class="chev" style="left:21.3px" viewBox="0 0 12 12"><path d="M3.6 2 L8.3 6 L3.6 10" /></svg><span style="left:41.4px">Dec 1, 2013</span></div>
<div class="td l" style="left:164px;top:652px;width:113px;height:32px;line-height:32px">Dec 31, 2013</div>
<div class="td l cur" style="left:278px;top:652px;width:113px;height:32px;line-height:32px">EUR</div>
<div class="td r" style="left:392px;top:652px;width:113px;height:32px;line-height:32px">779,469.44</div>
<div class="td r" style="left:506px;top:652px;width:113px;height:32px;line-height:32px">795,058.83</div>
<div class="td r" style="left:620px;top:652px;width:113px;height:32px;line-height:32px">15,589.39</div>
<div class="td r" style="left:734px;top:652px;width:114px;height:32px;line-height:32px">-697,182.71</div>
<div class="td r" style="left:849px;top:652px;width:114px;height:32px;line-height:32px">-693,696.8</div>
<div class="td r" style="left:964px;top:652px;width:114px;height:32px;line-height:32px">3,485.91</div>
<div class="td r" style="left:1079px;top:652px;width:114px;height:32px;line-height:32px">19,075.3</div>
<div class="td r" style="left:1194px;top:652px;width:114px;height:32px;line-height:32px">763,880.05</div>
<div class="td r" style="left:1309px;top:652px;width:114px;height:32px;line-height:32px">31,178.78</div>
<div class="td r" style="left:1424px;top:652px;width:114px;height:32px;line-height:32px">-693,696.8</div>
<div class="td r" style="left:1539px;top:652px;width:114px;height:32px;line-height:32px">-3,485.91</div>
<div class="td r" style="left:1654px;top:652px;width:114px;height:32px;line-height:32px">27,692.86</div>
<div class="hd" style="top:717px"></div>
<div class="td first" style="left:50px;top:685px;width:113px;height:32px;line-height:32px"><svg class="chev" style="left:21.3px" viewBox="0 0 12 12"><path d="M3.6 2 L8.3 6 L3.6 10" /></svg><span style="left:41.4px">Jan 1, 2014</span></div>
<div class="td l" style="left:164px;top:685px;width:113px;height:32px;line-height:32px">Dec 31, 2014</div>
<div class="td l cur" style="left:278px;top:685px;width:113px;height:32px;line-height:32px">EUR</div>
<div class="td r" style="left:392px;top:685px;width:113px;height:32px;line-height:32px">3,640,022.76</div>
<div class="td r" style="left:506px;top:685px;width:113px;height:32px;line-height:32px">3,712,823.21</div>
<div class="td r" style="left:620px;top:685px;width:113px;height:32px;line-height:32px">72,800.46</div>
<div class="td r" style="left:734px;top:685px;width:114px;height:32px;line-height:32px">-2,753,081.58</div>
<div class="td r" style="left:849px;top:685px;width:114px;height:32px;line-height:32px">-2,739,316.17</div>
<div class="td r" style="left:964px;top:685px;width:114px;height:32px;line-height:32px">13,765.41</div>
<div class="td r" style="left:1079px;top:685px;width:114px;height:32px;line-height:32px">86,565.86</div>
<div class="td r" style="left:1194px;top:685px;width:114px;height:32px;line-height:32px">3,567,222.3</div>
<div class="td r" style="left:1309px;top:685px;width:114px;height:32px;line-height:32px">145,600.91</div>
<div class="td r" style="left:1424px;top:685px;width:114px;height:32px;line-height:32px">-2,739,316.17</div>
<div class="td r" style="left:1539px;top:685px;width:114px;height:32px;line-height:32px">-13,765.41</div>
<div class="td r" style="left:1654px;top:685px;width:114px;height:32px;line-height:32px">131,835.5</div>
<div class="hd" style="top:750px"></div>
<div class="td first" style="left:50px;top:718px;width:113px;height:32px;line-height:32px"><svg class="chev" style="left:21.3px" viewBox="0 0 12 12"><path d="M3.6 2 L8.3 6 L3.6 10" /></svg><span style="left:41.4px">Jan 1, 2015</span></div>
<div class="td l" style="left:164px;top:718px;width:113px;height:32px;line-height:32px">Dec 31, 2015</div>
<div class="td l cur" style="left:278px;top:718px;width:113px;height:32px;line-height:32px">EUR</div>
<div class="td r" style="left:392px;top:718px;width:113px;height:32px;line-height:32px">2,246,422.89</div>
<div class="td r" style="left:506px;top:718px;width:113px;height:32px;line-height:32px">2,291,351.34</div>
<div class="td r" style="left:620px;top:718px;width:113px;height:32px;line-height:32px">44,928.46</div>
<div class="td r" style="left:734px;top:718px;width:114px;height:32px;line-height:32px">-2,181,000.31</div>
<div class="td r" style="left:849px;top:718px;width:114px;height:32px;line-height:32px">-2,170,095.31</div>
<div class="td r" style="left:964px;top:718px;width:114px;height:32px;line-height:32px">10,905</div>
<div class="td r" style="left:1079px;top:718px;width:114px;height:32px;line-height:32px">55,833.46</div>
<div class="td r" style="left:1194px;top:718px;width:114px;height:32px;line-height:32px">2,201,494.43</div>
<div class="td r" style="left:1309px;top:718px;width:114px;height:32px;line-height:32px">89,856.92</div>
<div class="td r" style="left:1424px;top:718px;width:114px;height:32px;line-height:32px">-2,170,095.31</div>
<div class="td r" style="left:1539px;top:718px;width:114px;height:32px;line-height:32px">-10,905</div>
<div class="td r" style="left:1654px;top:718px;width:114px;height:32px;line-height:32px">78,951.91</div>
<div class="hd" style="top:783px"></div>
<div class="td first" style="left:50px;top:751px;width:113px;height:32px;line-height:32px"><svg class="chev" style="left:21.3px" viewBox="0 0 12 12"><path d="M3.6 2 L8.3 6 L3.6 10" /></svg><span style="left:41.4px">Jan 1, 2016</span></div>
<div class="td l" style="left:164px;top:751px;width:113px;height:32px;line-height:32px">Dec 31, 2016</div>
<div class="td l cur" style="left:278px;top:751px;width:113px;height:32px;line-height:32px">EUR</div>
<div class="td r" style="left:392px;top:751px;width:113px;height:32px;line-height:32px">720,259.03</div>
<div class="td r" style="left:506px;top:751px;width:113px;height:32px;line-height:32px">734,664.21</div>
<div class="td r" style="left:620px;top:751px;width:113px;height:32px;line-height:32px">14,405.18</div>
<div class="td r" style="left:734px;top:751px;width:114px;height:32px;line-height:32px">-1,487,062.9</div>
<div class="td r" style="left:849px;top:751px;width:114px;height:32px;line-height:32px">-1,479,627.59</div>
<div class="td r" style="left:964px;top:751px;width:114px;height:32px;line-height:32px">7,435.31</div>
<div class="td r" style="left:1079px;top:751px;width:114px;height:32px;line-height:32px">21,840.5</div>
<div class="td r" style="left:1194px;top:751px;width:114px;height:32px;line-height:32px">705,853.85</div>
<div class="td r" style="left:1309px;top:751px;width:114px;height:32px;line-height:32px">28,810.36</div>
<div class="td r" style="left:1424px;top:751px;width:114px;height:32px;line-height:32px">-1,479,627.59</div>
<div class="td r" style="left:1539px;top:751px;width:114px;height:32px;line-height:32px">-7,435.31</div>
<div class="td r" style="left:1654px;top:751px;width:114px;height:32px;line-height:32px">21,375.05</div>
<div id="sb"><div class="thumb"></div><svg style="position:absolute;left:-1px;top:0;width:17px;height:779px" viewBox="0 0 17 779"><polygon points="4.8,11.2 8.5,6.8 12.2,11.2" fill="#a3a3a3"/><polygon points="4.8,769 12.2,769 8.5,773.3" fill="#505050"/></svg></div>
<div id="topline"></div>
<div id="leftline"></div>
<div id="botline"></div>
</div>
</body>
</html>
